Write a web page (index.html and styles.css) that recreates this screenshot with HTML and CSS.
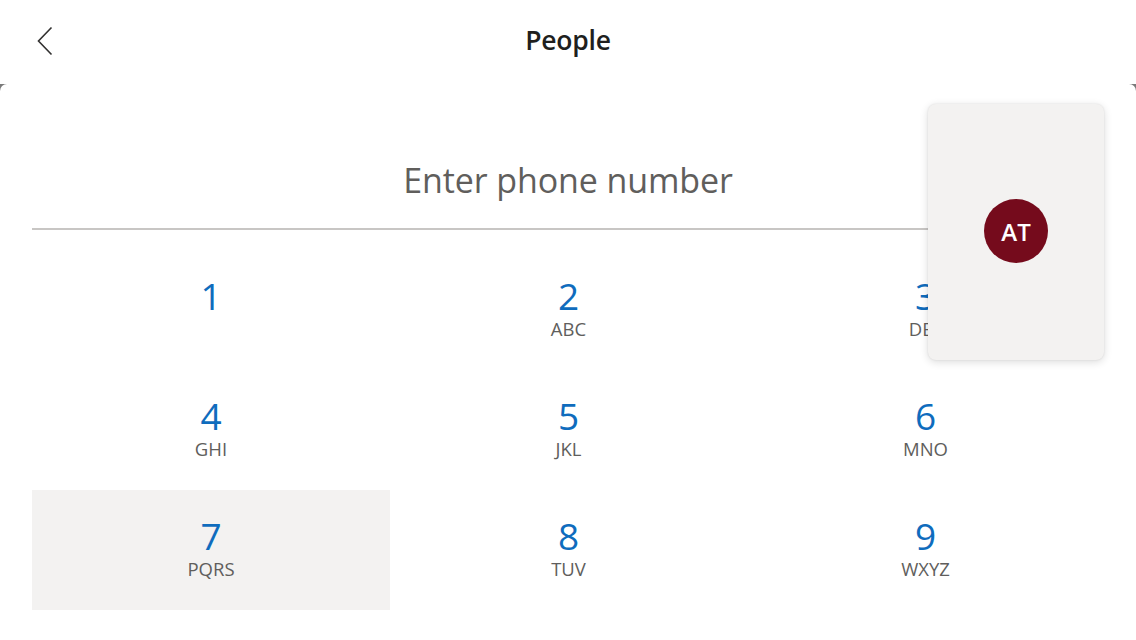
FILE: index.html
```html
<!DOCTYPE html>
<html>
<head>
<meta charset="utf-8">
<link rel="stylesheet" href="styles.css">
</head>
<body>
<div class="app">
  <header class="header">
    <button class="back" aria-label="Back">
      <svg width="18" height="30" viewBox="0 0 18 30"><path d="M15.5 1.5 L2.5 15 L15.5 28.5" fill="none" stroke="#323130" stroke-width="1.6"/></svg>
    </button>
    <h1 class="title">People</h1>
  </header>
  <div class="backdrop">
    <main class="sheet">
      <div class="field">
        <div class="placeholder">Enter phone number</div>
      </div>
      <div class="keypad">
        <div class="key"><span class="digit">1</span><span class="letters"></span></div>
        <div class="key"><span class="digit">2</span><span class="letters">ABC</span></div>
        <div class="key"><span class="digit">3</span><span class="letters">DEF</span></div>
        <div class="key"><span class="digit">4</span><span class="letters">GHI</span></div>
        <div class="key"><span class="digit">5</span><span class="letters">JKL</span></div>
        <div class="key"><span class="digit">6</span><span class="letters">MNO</span></div>
        <div class="key pressed"><span class="digit">7</span><span class="letters">PQRS</span></div>
        <div class="key"><span class="digit">8</span><span class="letters">TUV</span></div>
        <div class="key"><span class="digit">9</span><span class="letters">WXYZ</span></div>
      </div>
      <div class="suggest">
        <div class="avatar">AT</div>
      </div>
    </main>
  </div>
</div>
</body>
</html>
```
FILE: styles.css
```css
* { box-sizing: border-box; }
html, body { margin: 0; padding: 0; }
body {
  width: 1136px;
  height: 640px;
  overflow: hidden;
  background: #ffffff;
  font-family: "Open Sans", "Noto Sans", sans-serif;
}
.app { display: flex; flex-direction: column; height: 640px; }
.header {
  height: 84px;
  display: flex;
  align-items: center;
  justify-content: center;
  position: relative;
  background: #fff;
}
.back {
  position: absolute;
  left: 36px;
  top: 26px;
  border: 0;
  background: none;
  padding: 0;
  width: 18px;
  height: 30px;
}
.back svg { display: block; }
.title {
  margin: 0;
  margin-top: -4px;
  font-size: 26.5px;
  font-weight: 600;
  color: #201f1e;
  letter-spacing: -0.2px;
}
.backdrop {
  flex: 1;
  background: #7a7a7a;
  display: flex;
}
.sheet {
  flex: 1;
  background: #fff;
  border-radius: 7px 7px 0 0;
  padding: 0 32px;
  position: relative;
}
.field {
  height: 146px;
  border-bottom: 2px solid #c8c6c4;
  display: flex;
  align-items: flex-end;
  justify-content: center;
  padding-bottom: 28px;
}
.placeholder {
  font-size: 34px;
  color: #605e5c;
  line-height: 40px;
  letter-spacing: -0.1px;
}
.keypad {
  margin-top: 20px;
  display: grid;
  grid-template-columns: 358px 357px 357px;
  grid-auto-rows: 120px;
}
.key {
  display: flex;
  flex-direction: column;
  align-items: center;
  padding-top: 24px;
}
.key.pressed { background: #f3f2f1; }
.digit {
  font-size: 37px;
  line-height: 44px;
  color: #0f6cbd;
}
.letters {
  font-size: 18.5px;
  line-height: 22px;
  color: #605e5c;
}
.suggest {
  position: absolute;
  left: 928px;
  top: 20px;
  width: 176px;
  height: 256px;
  background: #f3f2f1;
  border-radius: 8px;
  box-shadow: 0 2px 8px rgba(0,0,0,0.14), 0 0 2px rgba(0,0,0,0.1);
  display: flex;
  align-items: center;
  justify-content: center;
}
.avatar {
  width: 64px;
  height: 64px;
  border-radius: 50%;
  background: #750b1c;
  color: #fff;
  font-size: 24px;
  font-weight: 600;
  display: flex;
  align-items: center;
  justify-content: center;
  margin-bottom: 2px;
}
```
